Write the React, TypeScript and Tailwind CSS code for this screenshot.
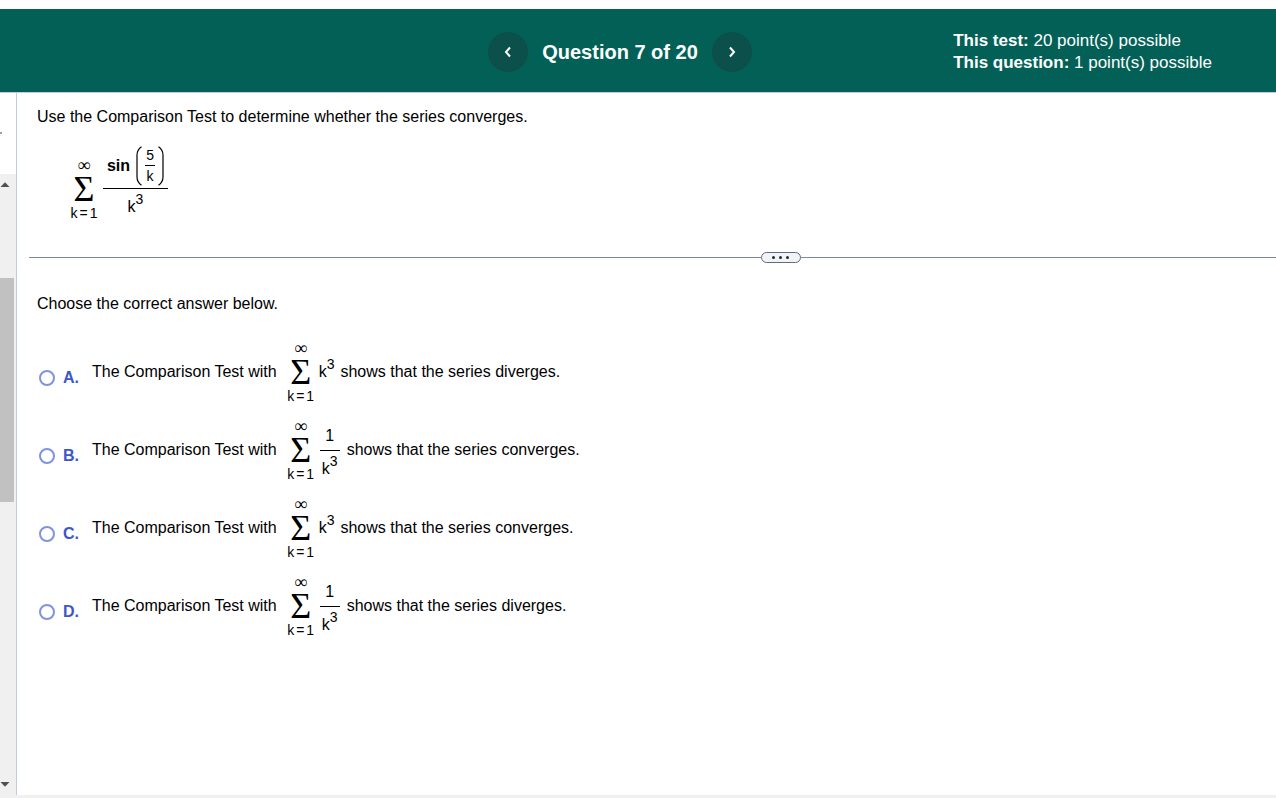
import type { ReactNode } from "react";
import { clsx } from "clsx";

type Option = {
  letter: string;
  term: "power" | "fraction";
  result: string;
};

const OPTIONS: Option[] = [
  { letter: "A", term: "power", result: "diverges" },
  { letter: "B", term: "fraction", result: "converges" },
  { letter: "C", term: "power", result: "converges" },
  { letter: "D", term: "fraction", result: "diverges" },
];

function Sum() {
  return (
    <span className="inline-flex w-7 shrink-0 flex-col items-center">
      <span className="font-['Liberation_Serif',serif] text-lg leading-4">∞</span>
      <span className="font-['Liberation_Serif',serif] text-4xl leading-8">Σ</span>
      <span className="flex gap-0.5 text-sm leading-4">
        <span>k</span>
        <span>=</span>
        <span>1</span>
      </span>
    </span>
  );
}

function KCubed() {
  return (
    <span className="flex items-start leading-5">
      k<sup className="top-0 -mt-1.5 text-sm leading-4">3</sup>
    </span>
  );
}

// Both halves get the same height so the bar stays on the math axis.
function Fraction({
  top,
  bottom,
  className,
}: {
  top: ReactNode;
  bottom: ReactNode;
  className?: string;
}) {
  return (
    <span
      className={clsx("inline-grid grid-rows-[1fr_1px_1fr] justify-items-center", className)}
    >
      <span className="self-end">{top}</span>
      <span className="w-full bg-black" />
      <span>{bottom}</span>
    </span>
  );
}

function Paren({ side }: { side: "left" | "right" }) {
  return (
    <svg
      viewBox="0 0 6 40"
      className={clsx("h-10 w-1.5", side === "right" && "-scale-x-100")}
      fill="none"
      stroke="black"
      strokeWidth="1.2"
      aria-hidden="true"
    >
      <path d="M5.5 0.7C2.2 3 1 5 1 9v22c0 4 1.2 6 4.5 8.3" />
    </svg>
  );
}

function NavButton({ label, path }: { label: string; path: string }) {
  return (
    <button
      type="button"
      aria-label={label}
      className="flex size-10 items-center justify-center rounded-full bg-[#0b504b]"
    >
      <svg viewBox="0 0 12 12" className="size-3" fill="none" stroke="white" strokeWidth="2">
        <path d={path} />
      </svg>
    </button>
  );
}

function Header() {
  return (
    <header className="mt-[9px] grid grid-cols-[1fr_auto_1fr] items-center border-b border-[#c5cddb] bg-[#036056] pt-[21px] pr-9 pb-[18px] text-white">
      <div className="col-start-2 flex items-center gap-3.5">
        <NavButton label="Previous question" path="M8 1.5 4 6l4 4.5" />
        <h1 className="text-xl leading-6 font-bold">Question 7 of 20</h1>
        <NavButton label="Next question" path="M4 1.5 8 6l-4 4.5" />
      </div>
      <div className="mr-7 justify-self-end text-[17px] leading-[22px]">
        <p>
          <b>This test:</b> 20 point(s) possible
        </p>
        <p>
          <b>This question:</b> 1 point(s) possible
        </p>
      </div>
    </header>
  );
}

function Sidebar() {
  return (
    <aside className="flex w-[17px] shrink-0 flex-col border-r border-[#c5cddb]">
      <div className="h-[81px] pt-[39px]">
        <div className="h-0.5 w-0.5 bg-gray-400" />
      </div>
      <div className="flex flex-1 flex-col bg-[#f0f0f0] py-2">
        <svg viewBox="0 0 10 5" className="h-[5px] w-2.5" fill="#505050" aria-hidden="true">
          <path d="M0.5 5 5 0.3 9.5 5z" />
        </svg>
        <div className="flex flex-1 flex-col py-4">
          <div className="flex-[13]" />
          <div className="w-3.5 flex-[39] bg-[#c1c1c1]" />
          <div className="flex-[46]" />
        </div>
        <svg viewBox="0 0 10 5" className="h-[5px] w-2.5" fill="#505050" aria-hidden="true">
          <path d="M0.5 0 5 4.7 9.5 0z" />
        </svg>
      </div>
    </aside>
  );
}

function Divider() {
  return (
    <div className="flex items-center pl-3">
      <div className="h-px flex-[20] bg-[#7d869c]" />
      <button
        type="button"
        aria-label="Resize panels"
        className="flex h-[11px] w-10 items-center justify-center gap-1 rounded-full border border-[#5f6b85] bg-[#f2f3f5]"
      >
        <span className="size-[3px] rounded-full bg-gray-800" />
        <span className="size-[3px] rounded-full bg-gray-800" />
        <span className="size-[3px] rounded-full bg-gray-800" />
      </button>
      <div className="h-px flex-[13] bg-[#7d869c]" />
    </div>
  );
}

function AnswerOption({ letter, term, result }: Option) {
  const id = `option-${letter}`;

  return (
    <div className="flex items-center">
      <input
        type="radio"
        id={id}
        name="answer"
        className="mt-3 size-4 shrink-0 appearance-none rounded-full border-2 border-[#7f93de] bg-white checked:bg-[#3c57c9]"
      />
      <label htmlFor={id} className="flex items-center">
        <span className="mt-3 ml-2 w-[29px] font-bold text-[#3c57c9]">{letter}.</span>
        <span className="mr-2.5">The Comparison Test with</span>
        <Sum />
        {term === "power" ? (
          <span className="mr-1.5 ml-1">
            <KCubed />
          </span>
        ) : (
          <Fraction
            className="mr-[7px] ml-[5px] w-5"
            top={<span className="block leading-7">1</span>}
            bottom={
              <span className="block pt-2">
                <KCubed />
              </span>
            }
          />
        )}
        <span>shows that the series {result}.</span>
      </label>
    </div>
  );
}

export default function App() {
  return (
    <div className="flex min-h-screen flex-col bg-white font-['Liberation_Sans',Arial,sans-serif] text-base text-black">
      <Header />
      <div className="flex flex-1">
        <Sidebar />
        <main className="flex-1 pt-3">
          <section className="pl-5">
            <p>Use the Comparison Test to determine whether the series converges.</p>
            <div className="mt-4 ml-[33px] flex items-center">
              <Sum />
              <Fraction
                className="ml-[5px] w-[65px]"
                top={
                  <span className="flex items-center pb-0.5">
                    <b className="mr-1.5">sin</b>
                    <Paren side="left" />
                    <Fraction
                      className="mx-[3px] w-2.5 text-sm leading-5"
                      top="5"
                      bottom="k"
                    />
                    <Paren side="right" />
                  </span>
                }
                bottom={
                  <span className="block pt-2">
                    <KCubed />
                  </span>
                }
              />
            </div>
          </section>
          <div className="mt-5">
            <Divider />
          </div>
          <section className="mt-[29px] pl-5">
            <p id="answer-prompt">Choose the correct answer below.</p>
            <div
              role="radiogroup"
              aria-labelledby="answer-prompt"
              className="mt-6 ml-0.5 flex flex-col gap-3.5"
            >
              {OPTIONS.map((option) => (
                <AnswerOption key={option.letter} {...option} />
              ))}
            </div>
          </section>
        </main>
      </div>
      <footer className="h-[3px] bg-[#f0f0f0]" />
    </div>
  );
}
